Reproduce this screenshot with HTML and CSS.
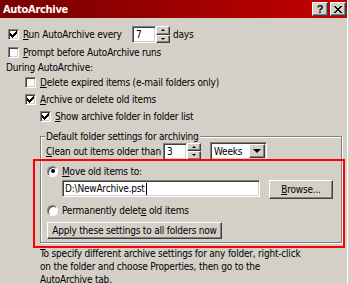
FILE: index.html
```html
<!DOCTYPE html>
<html>
<head>
<meta charset="utf-8">
<link rel="stylesheet" href="styles.css">
</head>
<body>
<div class="frame">
  <div class="inner">
    <div class="titlebar">
      <span class="title">AutoArchive</span>
      <div class="tb-buttons">
        <span class="tb-btn help">?</span>
        <span class="tb-btn close"><svg width="8" height="7" viewBox="0 0 8 7"><path d="M0 0h2v1h-2zM6 0h2v1h-2zM1 1h2v1h-2zM5 1h2v1h-2zM2 2h4v1h-4zM3 3h2v1h-2zM2 4h4v1h-4zM1 5h2v1h-2zM5 5h2v1h-2zM0 6h2v1h-2zM6 6h2v1h-2z" fill="#000"/></svg></span>
      </div>
    </div>
    <div class="content">
      <div class="row row-run">
        <span class="cb"><svg class="tick" width="7" height="7" viewBox="0 0 7 7"><path d="M6 0h1v1h-1zM5 1h2v1h-2zM0 2h1v1h-1zM4 2h3v1h-3zM0 3h2v1h-2zM3 3h3v1h-3zM0 4h5v1h-5zM1 5h3v1h-3zM2 6h1v1h-1z" fill="#000"/></svg></span>
        <span class="lbl-run"><u>R</u>un AutoArchive every</span>
        <div class="spin">
          <span class="field num">7</span>
          <span class="spinbtns"><span class="sb up"></span><span class="sb down"></span></span>
        </div>
        <span class="days">days</span>
      </div>
      <div class="row row-prompt">
        <span class="cb"></span>
        <span><u>P</u>rompt before AutoArchive runs</span>
      </div>
      <div class="row row-during">During AutoArchive:</div>
      <div class="row row-delete">
        <span class="cb"></span>
        <span><u>D</u>elete expired items (e-mail folders only)</span>
      </div>
      <div class="row row-archive">
        <span class="cb"><svg class="tick" width="7" height="7" viewBox="0 0 7 7"><path d="M6 0h1v1h-1zM5 1h2v1h-2zM0 2h1v1h-1zM4 2h3v1h-3zM0 3h2v1h-2zM3 3h3v1h-3zM0 4h5v1h-5zM1 5h3v1h-3zM2 6h1v1h-1z" fill="#000"/></svg></span>
        <span><u>A</u>rchive or delete old items</span>
      </div>
      <div class="row row-show">
        <span class="cb"><svg class="tick" width="7" height="7" viewBox="0 0 7 7"><path d="M6 0h1v1h-1zM5 1h2v1h-2zM0 2h1v1h-1zM4 2h3v1h-3zM0 3h2v1h-2zM3 3h3v1h-3zM0 4h5v1h-5zM1 5h3v1h-3zM2 6h1v1h-1z" fill="#000"/></svg></span>
        <span><u>S</u>how archive folder in folder list</span>
      </div>
      <div class="group">
        <div class="legend"><span>Default folder settings for archiving</span></div>
        <div class="row row-clean">
          <span class="lbl-clean"><u>C</u>lean out items older than</span>
          <div class="spin">
            <span class="field num">3</span>
            <span class="spinbtns"><span class="sb up"></span><span class="sb down"></span></span>
          </div>
          <div class="combo">
            <span class="combo-val">Weeks</span>
            <span class="combo-btn"><span class="down-arrow"></span></span>
          </div>
        </div>
        <div class="row row-radio">
          <span class="radio on"></span>
          <span><u>M</u>ove old items to:</span>
        </div>
        <div class="row row-path">
          <span class="field path">D:\NewArchive.pst<span class="caret"></span></span>
          <span class="btn browse"><span><u>B</u>rowse...</span></span>
        </div>
        <div class="row row-radio">
          <span class="radio"></span>
          <span>Permanently delet<u>e</u> old items</span>
        </div>
        <div class="row row-apply">
          <span class="btn apply">Apply these settings to all folders now</span>
        </div>
      </div>
      <p class="note">To specify different archive settings for any folder, right-click<br>on the folder and choose Properties, then go to the<br>AutoArchive tab.</p>
    </div>
  </div>
  <div class="highlight"></div>
</div>
</body>
</html>
```
FILE: styles.css
```css
* { box-sizing: border-box; }
html, body { margin: 0; padding: 0; }
body {
  width: 350px;
  height: 284px;
  overflow: hidden;
  background: #d4d0c8;
  font-family: "DejaVu Sans Condensed", "Liberation Sans", sans-serif;
  font-size: 10px;
  letter-spacing: -0.2px;
  color: #000;
}
.frame {
  position: relative;
  width: 350px;
  height: 284px;
  padding-right: 2px;
  background: #d4d0c8;
  overflow: hidden;
}
.inner {
  height: 100%;
  border-right: 1px solid #fff;
}
.titlebar {
  height: 18px;
  background: linear-gradient(to right, #7a0000, #8c0000 30%, #c40000);
  display: flex;
  align-items: center;
  justify-content: space-between;
  padding: 0 1px 0 3px;
  color: #fff;
  font-weight: bold;
  font-size: 11px;
  letter-spacing: -0.3px;
}
.tb-buttons { display: flex; gap: 2px; }
.tb-btn {
  width: 16px;
  height: 14px;
  background: #d4d0c8;
  border: 1px solid;
  border-color: #fff #404040 #404040 #fff;
  box-shadow: inset -1px -1px 0 #808080;
  display: flex;
  align-items: center;
  justify-content: center;
  color: #000;
  font-family: "Liberation Sans", sans-serif;
  font-weight: bold;
  font-size: 11px;
  letter-spacing: 0;
  line-height: 1;
}
.tb-btn svg { display: block; }
.content { padding-top: 8px; }
.row {
  display: flex;
  align-items: center;
  white-space: nowrap;
}
u { text-decoration: underline; text-underline-offset: 1px; }

.cb {
  width: 11px;
  height: 11px;
  flex: none;
  background: #fff;
  border: 1px solid;
  border-color: #808080 #fff #fff #808080;
  box-shadow: inset 1px 1px 0 #404040, inset -1px -1px 0 #d4d0c8;
  margin-right: 4px;
  display: flex;
  align-items: center;
  justify-content: center;
}
.tick { display: block; }

.row-run { height: 17px; padding-left: 8px; }
.lbl-run { width: 109px; }
.days { margin-left: 3px; }
.row-prompt { height: 16px; margin-top: 1px; padding-left: 8px; }
.row-during { height: 15px; padding-left: 6px; }
.row-delete { height: 15px; padding-left: 25px; }
.row-archive { height: 19px; padding-left: 25px; }
.row-show { height: 14px; padding-left: 40px; }

.field {
  background: #fff;
  border: 1px solid;
  border-color: #808080 #fff #fff #808080;
  box-shadow: inset 1px 1px 0 #404040, inset -1px -1px 0 #d4d0c8;
  height: 17px;
  padding-left: 3px;
  display: flex;
  align-items: center;
}
.spin { display: flex; height: 17px; flex: none; }
.field.num { width: 24px; }
.spinbtns {
  display: flex;
  flex-direction: column;
  width: 14px;
  height: 17px;
}
.sb {
  flex: 1;
  background: #d4d0c8;
  border: 1px solid;
  border-color: #fff #404040 #404040 #fff;
  box-shadow: inset -1px -1px 0 #808080;
  display: flex;
  align-items: center;
  justify-content: center;
}
.sb::after {
  content: "";
  width: 0;
  height: 0;
  border-left: 2px solid transparent;
  border-right: 2px solid transparent;
}
.sb.up::after { border-bottom: 2px solid #000; }
.sb.down::after { border-top: 2px solid #000; }

.group {
  margin: 13px 0 0 40px;
  width: 302px;
  border: 1px solid #808080;
  box-shadow: inset 1px 1px 0 #fff, 1px 1px 0 #fff;
  padding: 0 0 3px 5px;
}
.legend {
  height: 13px;
  line-height: 13px;
  margin: -7px 0 -6px -1px;
}
.legend span { background: #d4d0c8; padding: 0 1px; }
.row-clean { height: 18px; margin-top: 5px; }
.lbl-clean { width: 117px; flex: none; overflow: hidden; }
.combo {
  margin-left: 9px;
  width: 57px;
  height: 18px;
  background: #fff;
  border: 1px solid;
  border-color: #808080 #fff #fff #808080;
  box-shadow: inset 1px 1px 0 #404040, inset -1px -1px 0 #d4d0c8;
  display: flex;
  padding: 1px;
}
.combo-val { flex: 1; padding-left: 2px; display: flex; align-items: center; }
.combo-btn {
  width: 16px;
  background: #d4d0c8;
  border: 1px solid;
  border-color: #fff #404040 #404040 #fff;
  box-shadow: inset -1px -1px 0 #808080;
  display: flex;
  align-items: center;
  justify-content: center;
}
.down-arrow {
  width: 0;
  height: 0;
  border-left: 4px solid transparent;
  border-right: 4px solid transparent;
  border-top: 4px solid #000;
}

.radio {
  width: 11px;
  height: 11px;
  flex: none;
  border-radius: 50%;
  background: #fff;
  border: 1px solid;
  border-color: #808080 #fff #fff #808080;
  box-shadow: inset 1px 1px 0 #404040;
  margin-right: 4px;
  display: flex;
  align-items: center;
  justify-content: center;
}
.radio.on::after {
  content: "";
  width: 4px;
  height: 4px;
  border-radius: 50%;
  background: #000;
}
.row-radio { height: 14px; margin-top: 4px; padding-left: 1px; }
.row-path { height: 19px; margin-top: 2px; padding-left: 16px; align-items: flex-start; }
.field.path { width: 198px; padding-left: 2px; }
.caret { width: 1px; height: 12px; background: #000; margin-left: 1px; }
.btn {
  background: #d4d0c8;
  border: 1px solid;
  border-color: #fff #404040 #404040 #fff;
  box-shadow: inset -1px -1px 0 #808080;
  display: flex;
  align-items: center;
  justify-content: center;
}
.browse { width: 64px; height: 19px; margin-left: 9px; }
.row-apply { height: 17px; margin-top: 5px; padding-left: 1px; }
.apply { width: 175px; height: 17px; }

.note {
  margin: 4px 0 0 40px;
  line-height: 13px;
}
.highlight {
  position: absolute;
  left: 33px;
  top: 159px;
  width: 312px;
  height: 89px;
  border: 2px solid #f00;
}
```
